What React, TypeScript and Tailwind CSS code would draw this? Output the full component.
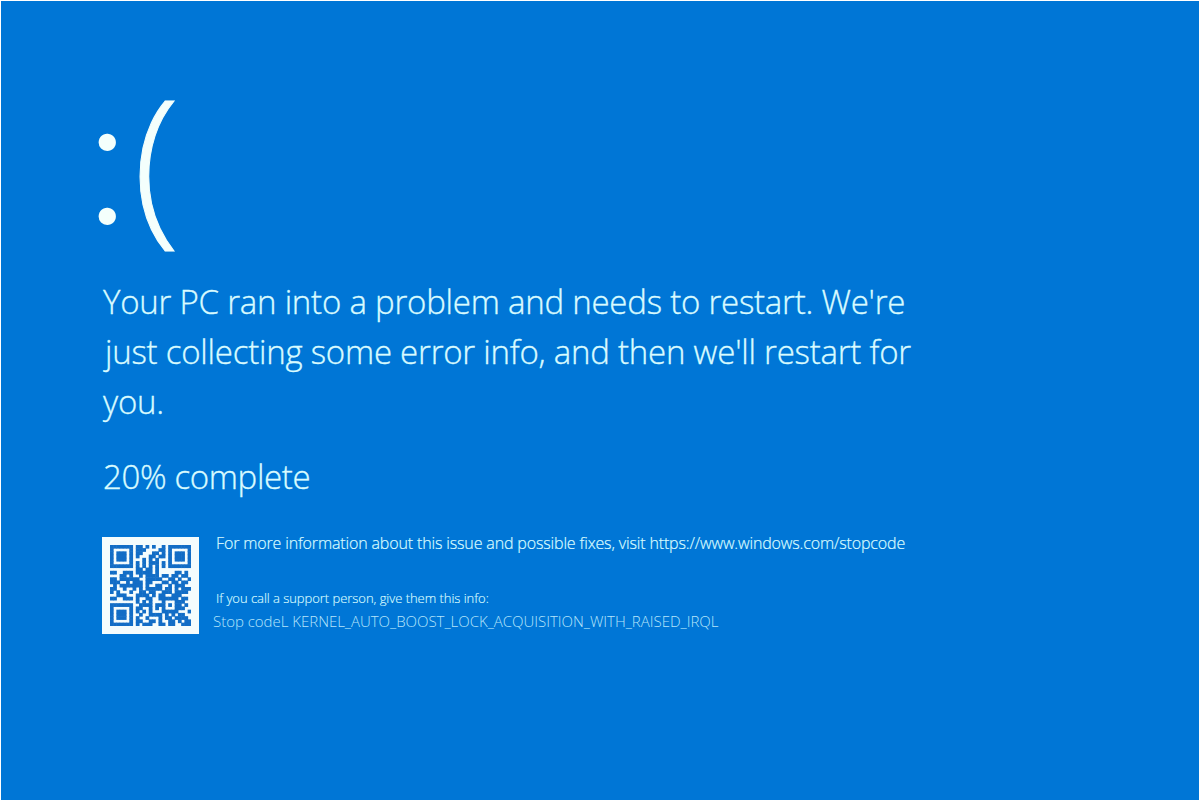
const QR_ROWS = [
  '#######.##.#.#..#.#######',
  '#.....#.###....##.#.....#',
  '#.###.#.##...##.#.#.###.#',
  '#.###.#.#...##.##.#.###.#',
  '#.###.#...#.#.#...#.###.#',
  '#.....#.#.#.###.#.#.....#',
  '#######.#.#.#.#.#.#######',
  '........##.##.#..........',
  '##..###.#####.#.....##.#.',
  '...##.#..#.####.##.##.##.',
  '##.######..#####..##.#..#',
  '###..#.###.##...##.##.##.',
  '.#.#######.#..##..#.###..',
  '##..#..#.#.#####.##.#.###',
  '#.#...#..##.##..###.####.',
  '..###...####.#.##..###...',
  '##..###.#..##..######.##.',
  '........#.#.#...#...###..',
  '#######..####.###.#.##.#.',
  '#.....#.##..#.#.#...###..',
  '#.###.#.#.#.#...#####...#',
  '#.###.#..#..####.#.#.##..',
  '#.###.#.#..#...#.##.####.',
  '#.....#.##..##.#..##.#.##',
  '#######.#.###..##.##..###',
];

function QrCode() {
  return (
    <div className="size-[97px] shrink-0 bg-[#f4fcfd] p-2">
      <svg viewBox="0 0 25 25" className="size-[81px]" fill="#126dc6">
        {QR_ROWS.map((row, y) =>
          row.split('').map((cell, x) =>
            cell === '#' ? <rect key={`${x}-${y}`} x={x - 0.04} y={y - 0.04} width="1.16" height="1.16" /> : null
          )
        )}
      </svg>
    </div>
  );
}

export default function App() {
  return (
    <div className="h-[801px] w-[1200px] bg-white p-px">
      <div className="h-[799px] w-[1198px] overflow-hidden bg-[#0076d6] pl-[101px] pt-[61px] font-['Open_Sans',sans-serif] font-light text-[#d9fbff]">
        {/* Sad face */}
        <div className="flex h-[190px] leading-[190px] text-[#f4fffc]">
          <span className="-mt-[5px] -ml-[17px] w-[48px] font-['Lato',sans-serif] text-[186px]">:</span>
          <span className="text-[172px] [-webkit-text-stroke:1px_#f4fffc]">(</span>
        </div>

        {/* Message */}
        <div className="mt-[25px] pl-px text-[33px] leading-[50px] tracking-[-0.23px] [-webkit-text-stroke:0.35px_#d9fbff]">
          <p>Your PC ran into a problem and needs to restart. We're</p>
          <p className="pl-0.5">just collecting some error info, and then we'll restart for</p>
          <p>you.</p>
          <p className="mt-[25px] tracking-[-0.35px]">20% complete</p>
        </div>

        {/* Details */}
        <div className="mt-[35px] flex">
          <QrCode />
          <div className="-mt-0.5 pl-[14px]">
            <p className="pl-[3px] text-[16px] leading-4 tracking-[-0.145px] [-webkit-text-stroke:0.2px_#d9fbff]">
              For more information about this issue and possible fixes, visit https://www.windows.com/stopcode
            </p>
            <p className="mt-[39px] pl-[3px] text-[13px] leading-4 tracking-[-0.04px] [-webkit-text-stroke:0.15px_#d9fbff]">
              If you call a support person, give them this info:
            </p>
            <p className="mt-[7px] text-[15px] leading-4 tracking-[-0.02px] text-[#b5e5fb]">
              Stop codeL KERNEL_AUTO_BOOST_LOCK_ACQUISITION_WITH_RAISED_IRQL
            </p>
          </div>
        </div>
      </div>
    </div>
  );
}
